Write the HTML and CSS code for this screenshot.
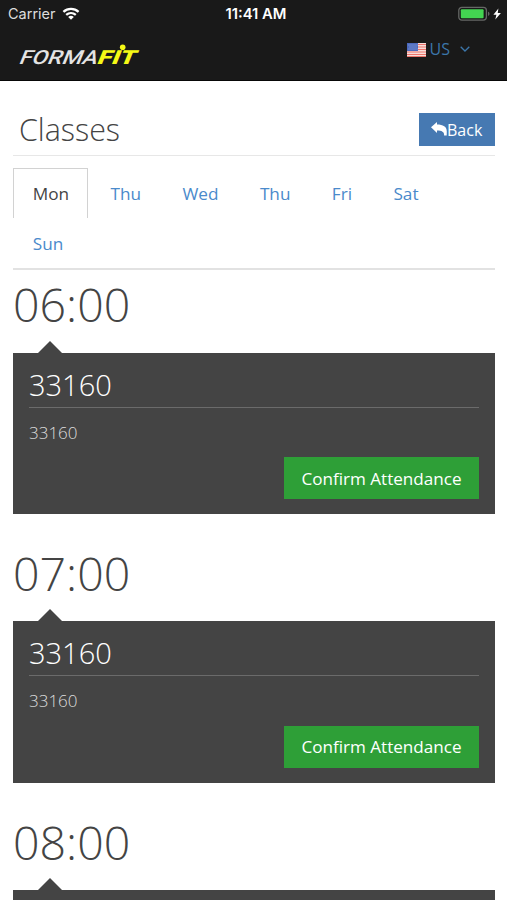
FILE: index.html
```
<!DOCTYPE html>
<html lang="en">
  <head>
    <meta charset="utf-8">
    <title>Classes</title>
    <link rel="stylesheet" href="styles.css">
  </head>
  <body>
    <header class="header">
      <div class="status">
        <div class="carrier">
          <span>Carrier</span>
          <svg class="wifi" viewBox="0 0 18 13" width="18" height="13">
            <path d="M1.4 4.8C5.8.8 12.2.8 16.6 4.8M4.2 7.9c2.8-2.5 6.8-2.5 9.6 0" fill="none" stroke="#fff" stroke-width="2.3"/>
            <path d="M6.2 9.9c1.7-1.4 3.9-1.4 5.6 0L9 12.8z" fill="#fff"/>
          </svg>
        </div>
        <div class="clock">11:41 AM</div>
        <svg class="battery" viewBox="0 0 44 16" width="44" height="16">
          <rect x=".8" y="1.3" width="27.6" height="12.8" rx="3" fill="none" stroke="#656765" stroke-width="1.3"/>
          <rect x="2.8" y="3.2" width="22.8" height="9" rx="1" fill="#43d551"/>
          <path d="M30 5.7c2 .7 2 3.5 0 4.2z" fill="#656765"/>
          <path d="M40.4 2.5L35.4 8.7h3L37.3 13.6l5.6-6.7h-3.2z" fill="#fff"/>
        </svg>
      </div>
      <div class="navbar">
        <svg class="logo" viewBox="0 0 124 24" width="124" height="24">
          <g transform="translate(1 18) skewX(-22)">
            <text class="logo_forma" x="-1" y="0" textLength="78" lengthAdjust="spacingAndGlyphs">FORMA</text>
            <text class="logo_fit" x="77" y="0" textLength="38" lengthAdjust="spacingAndGlyphs">FIT</text>
          </g>
          <circle cx="104.7" cy="1.2" r="2.8" fill="#f5f916"/>
        </svg>
        <div class="language">
          <svg class="flag" viewBox="0 0 19 14" width="19" height="14">
            <rect width="19" height="14" fill="#f6dcd8"/>
            <path d="M0 1.5h19M0 4h19M0 6.5h19M0 9h19M0 11.5h19M0 13.5h19" stroke="#ec746c" stroke-width="1.1"/>
            <rect width="11" height="8" fill="#4b69bd"/>
            <path d="M1.5 2h9M2.5 4h8M1.5 6h9" stroke="#a5b8e4" stroke-width=".8" stroke-dasharray="1 1"/>
          </svg>
          <span>US</span>
          <svg class="chevron" viewBox="0 0 10 6" width="10" height="6">
            <path d="M.7.7L5 5 9.3.7" fill="none" stroke="#3c76aa" stroke-width="1.3"/>
          </svg>
        </div>
      </div>
    </header>

    <main class="content">
      <div class="title_bar">
        <h1>Classes</h1>
        <button class="back">
          <svg viewBox="0 0 16 14" width="16" height="14">
            <path d="M0 5.2L6 0v2.6c6 0 9.8 2 9.8 7 0 1.5-.1 2.7-.1 3.8h-2.6c.2-3.4-2.3-4.8-7.1-4.8v2.4z" fill="#fff"/>
          </svg>
          <span>Back</span>
        </button>
      </div>

      <nav class="tabs">
        <a class="tab active">Mon</a>
        <a class="tab">Thu</a>
        <a class="tab">Wed</a>
        <a class="tab">Thu</a>
        <a class="tab">Fri</a>
        <a class="tab">Sat</a>
        <a class="tab">Sun</a>
      </nav>

      <section class="slot">
        <h2 class="time">06:00</h2>
        <div class="card">
          <h3 class="card_title">33160</h3>
          <p class="card_text">33160</p>
          <button class="confirm">Confirm Attendance</button>
        </div>
      </section>

      <section class="slot">
        <h2 class="time">07:00</h2>
        <div class="card">
          <h3 class="card_title">33160</h3>
          <p class="card_text">33160</p>
          <button class="confirm">Confirm Attendance</button>
        </div>
      </section>

      <section class="slot last">
        <h2 class="time">08:00</h2>
        <div class="card"></div>
      </section>
    </main>
  </body>
</html>
```
FILE: styles.css
```
* {
  box-sizing: border-box;
}

body {
  margin: 0;
  background: #fff;
  color: #444;
  font-family: "Open Sans", sans-serif;
  font-size: 17px;
}

h1, h2, h3, p {
  margin: 0;
  font-weight: 300;
}

button {
  border: 0;
  color: #fff;
  font-family: inherit;
}

svg {
  display: block;
}

/* status bar and navbar */
.header {
  height: 81px;
  background: #191919;
  border-bottom: 1px solid #080808;
}
.status {
  display: grid;
  grid-template-columns: 1fr auto 1fr;
  align-items: center;
  height: 27px;
  padding: 0 5px 0 8px;
  color: #fff;
  font-family: Inter, sans-serif;
  font-size: 14.5px;
}
.carrier {
  display: flex;
  align-items: center;
  gap: 6px;
  color: #ddd;
}
.clock {
  padding-left: 2px;
  font-weight: 600;
  font-size: 14.8px;
}
.battery {
  justify-self: end;
}
.navbar {
  display: flex;
  justify-content: space-between;
  align-items: flex-start;
  padding: 12px 37px 0 18px;
}
.logo {
  margin-top: 7px;
  overflow: visible;
}
.logo_forma, .logo_fit {
  font-family: Roboto, sans-serif;
  font-size: 19.5px;
  font-weight: 500;
  fill: #e4e4e4;
}
.logo_fit {
  font-weight: 900;
  fill: #f5f916;
}
.language {
  display: flex;
  align-items: center;
  height: 20px;
  color: #3c76aa;
  font-size: 16px;
}
.flag {
  margin: 2px 4px 0 0;
}
.chevron {
  margin-left: 10px;
}

/* page title */
.content {
  padding: 0 12px 0 13px;
}
.title_bar {
  display: flex;
  justify-content: space-between;
  align-items: flex-start;
  height: 75px;
  padding: 32px 0 0 6px;
  border-bottom: 1px solid #e7e7e7;
}
h1 {
  font-size: 30.4px;
  line-height: 34px;
}
.back {
  display: flex;
  align-items: center;
  width: 76px;
  height: 33px;
  padding: 0 0 0 12px;
  background: #4679b2;
  font-size: 16px;
}
.back svg {
  margin-top: -2px;
}

/* days of the week */
.tabs {
  display: flex;
  flex-wrap: wrap;
  height: 114px;
  padding-top: 12px;
  align-content: flex-start;
  border-bottom: 2px solid #e2e2e2;
}
.tab {
  height: 50px;
  margin-right: 2.4px;
  padding: 0 18.2px 0 18.8px;
  border: 1px solid transparent;
  border-bottom: 0;
  color: #4a8acb;
  font-size: 17.2px;
  line-height: 50px;
}
.tab.active {
  border-color: #d2d2d2;
  color: #444;
}

/* class cards */
.slot {
  height: 268.75px;
  padding-top: 5px;
}
.time {
  font-size: 46.5px;
  line-height: 58px;
}
.card {
  position: relative;
  display: flex;
  flex-direction: column;
  height: 161.5px;
  margin-top: 19.5px;
  padding: 15px 16px;
  background: #444;
  color: #fff;
}
.card::before {
  content: "";
  position: absolute;
  top: -12px;
  left: 25px;
  border: 12px solid transparent;
  border-top: 0;
  border-bottom-color: #444;
}
.last {
  height: auto;
}
.last .card {
  height: 10px;
  padding: 0;
}
.card_title {
  height: 40px;
  border-bottom: 1px solid #6b6b6b;
  font-size: 29px;
  line-height: 33px;
}
.card_text {
  margin-top: 13px;
  color: #ddd;
  font-size: 17px;
  line-height: 24px;
}
.confirm {
  align-self: flex-end;
  width: 195px;
  height: 42px;
  margin-top: auto;
  padding: 0;
  background: #2e9f37;
  font-size: 17.1px;
}
```
